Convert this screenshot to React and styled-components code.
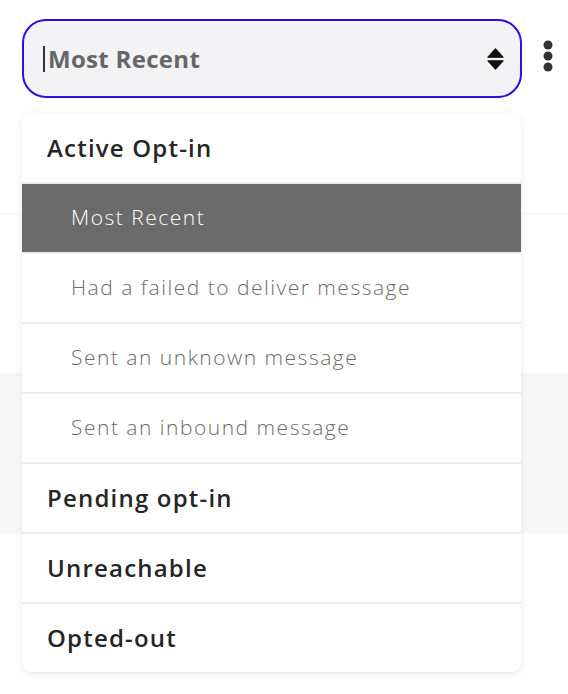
import React from "react";
import styled, { createGlobalStyle } from "styled-components";

const GlobalStyle = createGlobalStyle`
  body {
    margin: 0;
    background: #fff;
    font-family: "Open Sans", "Liberation Sans", sans-serif;
  }
`;

const Page = styled.div`
  position: relative;
  width: 568px;
  height: 694px;
  overflow: hidden;
`;

const Toolbar = styled.div`
  display: flex;
  align-items: flex-start;
  gap: 20px;
  padding: 19px 0 0 22px;
`;

const SelectBox = styled.div`
  box-sizing: border-box;
  width: 500px;
  height: 79px;
  display: flex;
  align-items: center;
  padding: 0 16px 0 19px;
  border: 2px solid #2b10e6;
  border-radius: 24px;
  background: #f3f3f5;
`;

const Caret = styled.span`
  width: 2px;
  height: 26px;
  background: #333;
  margin-right: 3px;
`;

const SelectValue = styled.span`
  flex: 1;
  font-size: 24px;
  font-weight: 700;
  color: #666;
  letter-spacing: 0.3px;
`;

const MoreButton = styled.button`
  border: 0;
  background: none;
  padding: 0;
  margin-top: 21px;
  display: flex;
`;

const Divider = styled.div`
  margin-top: 115px;
  height: 3px;
  background: linear-gradient(#f6f6f6, #fff);
`;

const Band = styled.div`
  margin-top: 157px;
  height: 160px;
  background: #f8f8f8;
`;

const Menu = styled.ul`
  position: absolute;
  left: 22px;
  top: 114px;
  width: 499px;
  margin: 0;
  padding: 0;
  list-style: none;
  background: #fff;
  border-radius: 10px;
  box-shadow: 0 2px 10px rgba(0, 0, 0, 0.07), 0 1px 2px rgba(0, 0, 0, 0.05);
  overflow: hidden;
`;

const Item = styled.li`
  box-sizing: border-box;
  height: 70px;
  display: flex;
  align-items: center;
  padding: 0 0 2px ${(p) => (p.$sub ? 49 : 25)}px;
  border-bottom: 2px solid #ebebeb;
  font-size: ${(p) => (p.$sub ? 21 : 24)}px;
  font-weight: ${(p) => (p.$sub ? 300 : 600)};
  color: ${(p) => (p.$active ? "#fff" : p.$sub ? "#6c6c6c" : "#262626")};
  background: ${(p) => (p.$active ? "#6b6b6b" : "#fff")};
  letter-spacing: ${(p) => (p.$sub ? "1.5px" : "1.2px")};

  &:last-child {
    height: 68px;
    border-bottom: none;
  }
`;

const items = [
  { label: "Active Opt-in" },
  { label: "Most Recent", sub: true, active: true },
  { label: "Had a failed to deliver message", sub: true },
  { label: "Sent an unknown message", sub: true },
  { label: "Sent an inbound message", sub: true },
  { label: "Pending opt-in" },
  { label: "Unreachable" },
  { label: "Opted-out" },
];

function SortArrows() {
  return (
    <svg width="17" height="22" viewBox="0 0 17 22">
      <path d="M8.5 1 L16 9.2 H1 Z" fill="#111" strokeLinejoin="round" stroke="#111" strokeWidth="1.2" />
      <path d="M8.5 21 L16 12.8 H1 Z" fill="#111" strokeLinejoin="round" stroke="#111" strokeWidth="1.2" />
    </svg>
  );
}

function Kebab() {
  return (
    <svg width="12" height="32" viewBox="0 0 12 32">
      <circle cx="6" cy="5" r="4.5" fill="#333" />
      <circle cx="6" cy="16" r="4.5" fill="#333" />
      <circle cx="6" cy="27" r="4.5" fill="#333" />
    </svg>
  );
}

export default function App() {
  return (
    <Page>
      <GlobalStyle />
      <Toolbar>
        <SelectBox>
          <Caret />
          <SelectValue>Most Recent</SelectValue>
          <SortArrows />
        </SelectBox>
        <MoreButton>
          <Kebab />
        </MoreButton>
      </Toolbar>
      <Divider />
      <Band />
      <Menu>
        {items.map((it) => (
          <Item key={it.label} $sub={it.sub} $active={it.active}>
            {it.label}
          </Item>
        ))}
      </Menu>
    </Page>
  );
}
